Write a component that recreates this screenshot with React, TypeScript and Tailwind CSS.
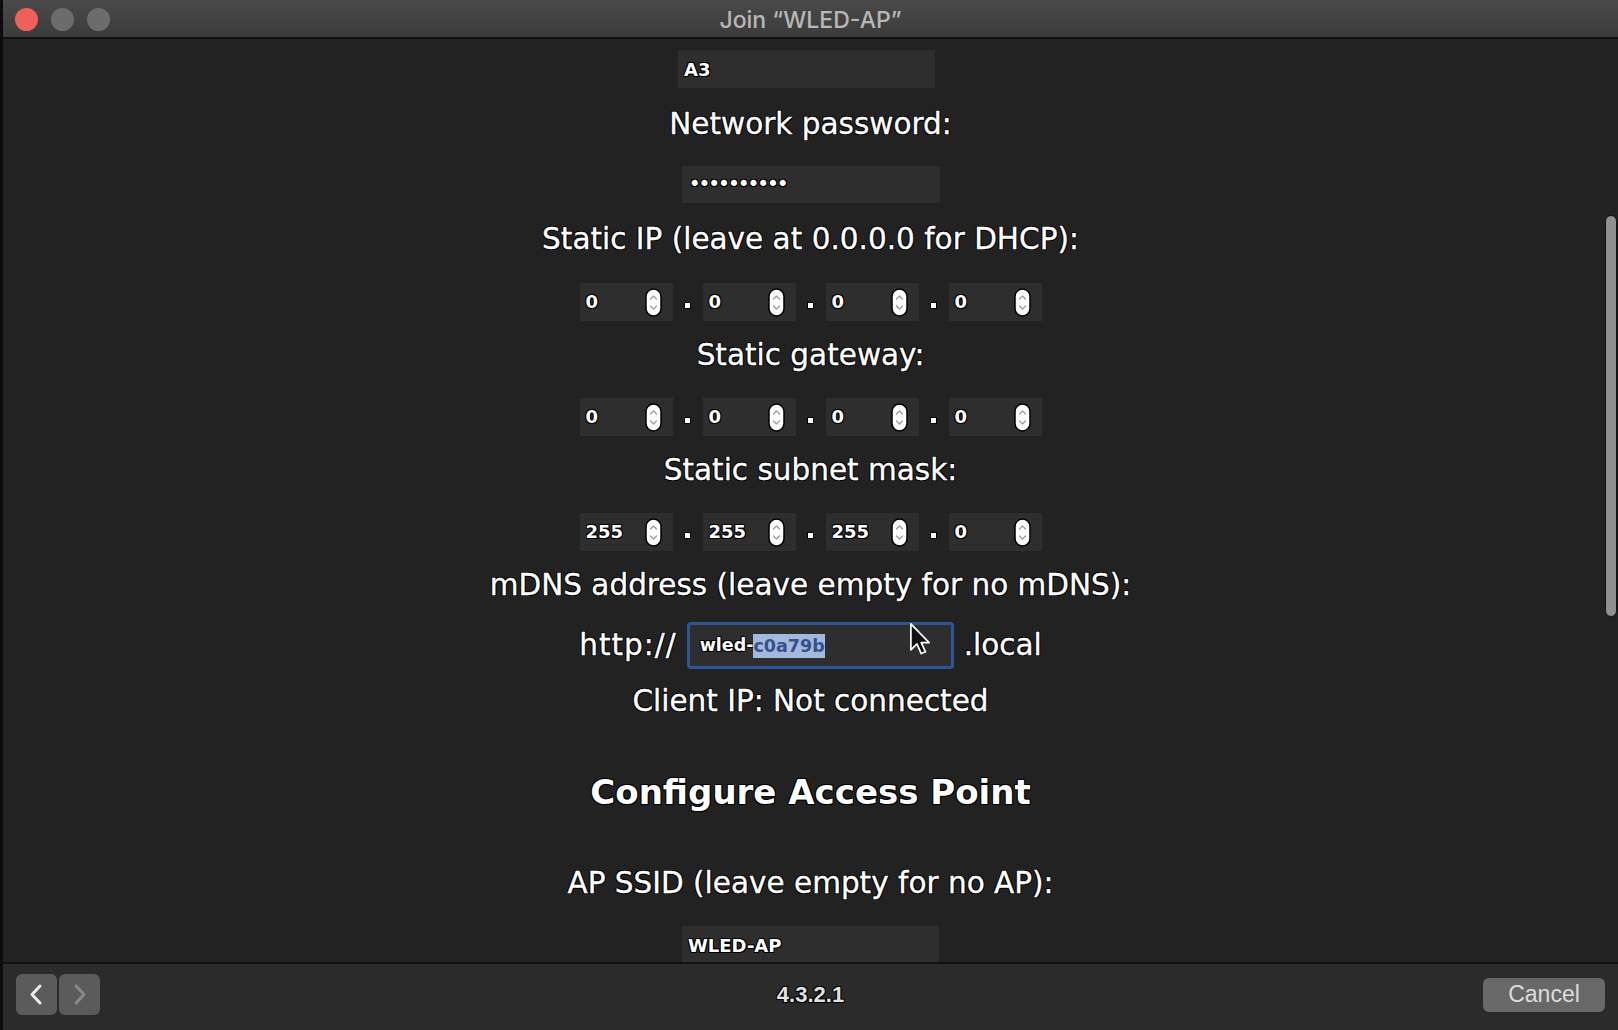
import React from "react";

const SH =
  "[text-shadow:-1px_-1px_0_#000,1px_-1px_0_#000,-1px_1px_0_#000,1px_1px_0_#000]";

function Spinner() {
  return (
    <svg width="17" height="29" viewBox="0 0 17 29">
      <rect x="1" y="1" width="15" height="27" rx="7.5" fill="#fff" stroke="#000" strokeWidth="1.5" />
      <path d="M5.5 11 L8.5 8 L11.5 11" stroke="#9a9a9a" fill="none" strokeWidth="1.2" strokeLinecap="round" strokeLinejoin="round" />
      <path d="M5.5 18 L8.5 21 L11.5 18" stroke="#9a9a9a" fill="none" strokeWidth="1.2" strokeLinecap="round" strokeLinejoin="round" />
    </svg>
  );
}

function NumBox({ v }: { v: string }) {
  return (
    <div className="w-[93px] h-[38px] bg-[#2e2e2e] flex items-center justify-between pl-[6px] pr-[11px]">
      <span className={"text-white font-bold text-[18px] leading-none " + SH}>{v}</span>
      <Spinner />
    </div>
  );
}

function Dot() {
  return (
    <div className="w-[30px] flex justify-center">
      <div className="w-[5px] h-[5px] bg-white mt-[7px] shadow-[0_0_0_1px_#000]" />
    </div>
  );
}

function IpRow({ vals, mt }: { vals: string[]; mt: string }) {
  return (
    <div className={"flex items-center " + mt}>
      <NumBox v={vals[0]} />
      <Dot />
      <NumBox v={vals[1]} />
      <Dot />
      <NumBox v={vals[2]} />
      <Dot />
      <NumBox v={vals[3]} />
    </div>
  );
}

function Label({ children, mt }: { children: React.ReactNode; mt: string }) {
  return (
    <div
      className={
        "h-[36px] leading-[36px] text-[29.5px] text-white whitespace-nowrap [-webkit-text-stroke:0.35px_#fff] " +
        SH +
        " " +
        mt
      }
    >
      {children}
    </div>
  );
}

export default function App() {
  return (
    <div className="w-[1618px] h-[1030px] flex flex-col overflow-hidden bg-[#222222] border-l-[3px] border-[#0c0c0c] font-['DejaVu_Sans',sans-serif]">
      {/* Title bar */}
      <div className="relative h-[39px] shrink-0 bg-gradient-to-b from-[#4a4a4a] to-[#3b3b3b] border-b-2 border-[#111111] flex items-center justify-center pt-[3px]">
        <div className="absolute left-[12px] top-[8px] flex gap-[13px]">
          <div className="w-[23px] h-[23px] rounded-full bg-[#f0605a]" />
          <div className="w-[23px] h-[23px] rounded-full bg-[#6c6c6c]" />
          <div className="w-[23px] h-[23px] rounded-full bg-[#6c6c6c]" />
        </div>
        <span className="font-['Inter',sans-serif] font-medium text-[23px] text-[#b7b7b7] leading-none">
          Join “WLED-AP”
        </span>
      </div>

      {/* Content */}
      <div className="relative flex-1 overflow-hidden bg-[#222222]">
        <div className="flex flex-col items-center">
          <div className={"mt-[11px] mr-[8px] w-[257px] h-[38px] bg-[#2e2e2e] flex items-center pl-[6px] text-white font-bold text-[18px] " + SH}>
            A3
          </div>
          <Label mt="mt-[18px]">Network password:</Label>
          <div className={"mt-[24px] w-[258px] h-[37px] bg-[#2e2e2e] flex items-center pl-[7px] text-white text-[21px] tracking-[-2.6px] " + SH}>
            ••••••••••
          </div>
          <Label mt="mt-[18px]">Static IP (leave at 0.0.0.0 for DHCP):</Label>
          <IpRow vals={["0", "0", "0", "0"]} mt="mt-[26px]" />
          <Label mt="mt-[16px]">Static gateway:</Label>
          <IpRow vals={["0", "0", "0", "0"]} mt="mt-[25px]" />
          <Label mt="mt-[16px]">Static subnet mask:</Label>
          <IpRow vals={["255", "255", "255", "0"]} mt="mt-[25px]" />
          <Label mt="mt-[16px]">mDNS address (leave empty for no mDNS):</Label>
          <div className="mt-[19px] flex items-center gap-[10px]">
            <span className={"text-[29.5px] text-white leading-none tracking-[1px] [-webkit-text-stroke:0.35px_#fff] " + SH}>http://</span>
            <div className="relative w-[267px] h-[47px] rounded-[4px] border-[3px] border-[#2d5598] bg-[#2e2e2e] flex items-center pl-[10px]">
              <span className={"text-white font-bold text-[17.5px] leading-none " + SH}>wled-</span>
              <span className="bg-[#a3b8dc] text-[#34528c] font-bold text-[17.5px] leading-[24px]">c0a79b</span>
              <svg
                className="absolute left-[219px] top-[-3px]"
                width="22"
                height="34"
                viewBox="0 0 18 28"
              >
                <path
                  d="M1.5 1.5 L1.5 23 L6.5 18 L10 26 L13.5 24.5 L10 17 L16.5 17 Z"
                  fill="#111"
                  stroke="#fff"
                  strokeWidth="1.4"
                  strokeLinejoin="round"
                />
              </svg>
            </div>
            <span className={"text-[29.5px] text-white leading-none [-webkit-text-stroke:0.35px_#fff] " + SH}>.local</span>
          </div>
          <Label mt="mt-[14px]">Client IP: Not connected</Label>
          <div className={"mt-[51px] h-[44px] leading-[44px] text-[34px] font-bold text-white " + SH}>
            Configure Access Point
          </div>
          <Label mt="mt-[51px]">AP SSID (leave empty for no AP):</Label>
          <div className={"mt-[25px] w-[257px] h-[38px] bg-[#2e2e2e] flex items-center pl-[6px] text-white font-bold text-[18px] " + SH}>
            WLED-AP
          </div>
        </div>
        {/* scrollbar thumb */}
        <div className="absolute right-[1px] top-[176px] w-[12px] h-[402px] rounded-full bg-[#8f8f8f] border border-[#111111]" />
      </div>

      {/* Footer */}
      <div className="h-[68px] shrink-0 border-t-2 border-[#111111] bg-[#2b2b2b] grid grid-cols-[1fr_auto_1fr] items-center px-[13px] pb-[5px]">
        <div className="flex gap-[2px] items-center">
          <div className="w-[41px] h-[41px] rounded-[6px] bg-[#5b5b5b] flex items-center justify-center">
            <svg width="41" height="41" viewBox="0 0 41 41">
              <path d="M24 12 L16 20.5 L24 29" stroke="#ececec" strokeWidth="3" fill="none" strokeLinecap="round" strokeLinejoin="round" />
            </svg>
          </div>
          <div className="w-[41px] h-[41px] rounded-[6px] bg-[#5b5b5b] flex items-center justify-center">
            <svg width="41" height="41" viewBox="0 0 41 41">
              <path d="M17 12 L25 20.5 L17 29" stroke="#8a8a8a" strokeWidth="3" fill="none" strokeLinecap="round" strokeLinejoin="round" />
            </svg>
          </div>
        </div>
        <div className={"font-['Liberation_Sans',sans-serif] font-bold text-[22px] text-[#e2e2e2] leading-none " + SH}>
          4.3.2.1
        </div>
        <div className="flex justify-end">
          <div className="w-[122px] h-[34px] rounded-[6px] bg-[#686868] flex items-center justify-center font-['Liberation_Sans',sans-serif] text-[23px] text-[#dcdcdc] leading-none">
            Cancel
          </div>
        </div>
      </div>
    </div>
  );
}
